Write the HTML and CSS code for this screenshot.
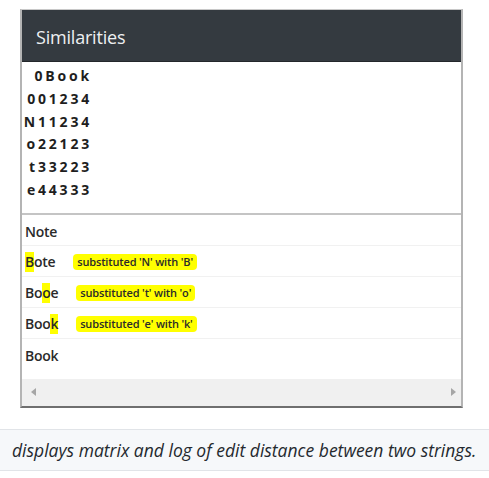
FILE: index.html
```html
<!DOCTYPE html>
<html>
<head>
<meta charset="utf-8">
<link rel="stylesheet" href="styles.css">
</head>
<body>
<div class="window">
  <div class="header">Similarities</div>
  <div class="matrix">
    <div class="line">0Book</div>
    <div class="line">001234</div>
    <div class="line">N11234</div>
    <div class="line">o22123</div>
    <div class="line">t33223</div>
    <div class="line">e44333</div>
  </div>
  <div class="list">
    <div class="row"><span class="word">Note</span></div>
    <div class="row"><span class="word"><span class="hl">B</span>ote</span><span class="badge">substituted 'N' with 'B'</span></div>
    <div class="row"><span class="word">Bo<span class="hl">o</span>e</span><span class="badge">substituted 't' with 'o'</span></div>
    <div class="row"><span class="word">Boo<span class="hl">k</span></span><span class="badge">substituted 'e' with 'k'</span></div>
    <div class="row last"><span class="word">Book</span></div>
    <div class="spacer"></div>
    <div class="hscroll">
      <span class="arrow left"></span>
      <span class="arrow right"></span>
    </div>
  </div>
</div>
<div class="caption"><em>displays matrix and log of edit distance between two strings.</em></div>
</body>
</html>
```
FILE: styles.css
```css
html, body {
  margin: 0;
  padding: 0;
  background: #ffffff;
}
body {
  font-family: "Open Sans", "Noto Sans", sans-serif;
  color: #222;
}
.window {
  margin: 9px 0 0 20px;
  width: 443px;
  box-sizing: border-box;
  border-top: 1px solid #c8c8c8;
  border-left: 2px solid #b4b4b4;
  border-right: 2px solid #b4b4b4;
  border-bottom: 2px solid #6f6f6f;
  background: #fff;
}
.header {
  height: 51px;
  background: #343a40;
  border-bottom: 1px solid #23272b;
  color: #eef0f2;
  font-size: 18px;
  line-height: 55px;
  padding-left: 14px;
  letter-spacing: -0.2px;
}
.matrix {
  padding: 3px 0 11px 0;
  border-bottom: 2px solid #c4c4c4;
}
.line {
  width: 70px;
  text-align: right;
  font-weight: 700;
  font-size: 14px;
  line-height: 22.8px;
  letter-spacing: 2.8px;
  color: #1e1e1e;
}
.list {
  display: flex;
  flex-direction: column;
}
.row {
  height: 27px;
  border-bottom: 1px solid #f1f1f1;
  display: flex;
  align-items: center;
  padding-left: 3px;
  padding-top: 3px;
  font-size: 14px;
  font-weight: 600;
  color: #2a2a2a;
}
.row.last {
  border-bottom: none;
}
.word {
  letter-spacing: -0.3px;
}
.hl {
  background: #ffff00;
  display: inline-block;
  line-height: 20px;
}
.badge {
  margin-left: 18px;
  background: #ffff00;
  border-radius: 4px;
  font-size: 11px;
  font-weight: 600;
  line-height: 16px;
  padding: 0 4px;
  letter-spacing: -0.15px;
  color: #2a2a2a;
}
.spacer {
  height: 10px;
}
.hscroll {
  height: 27px;
  background: #f0f0f0;
  display: flex;
  align-items: center;
  justify-content: space-between;
  padding: 0 5px 0 9px;
}
.arrow {
  width: 0;
  height: 0;
  border-top: 4px solid transparent;
  border-bottom: 4px solid transparent;
}
.arrow.left {
  border-right: 5px solid #a6a6a6;
}
.arrow.right {
  border-left: 5px solid #a6a6a6;
}
.caption {
  margin-top: 21px;
  background: #f6f8fa;
  border-top: 1px solid #e1e4e8;
  border-bottom: 1px solid #e1e4e8;
  height: 40px;
  line-height: 40px;
  padding-left: 12px;
  font-size: 17.5px;
  color: #24292e;
  white-space: nowrap;
}
.caption em {
  font-style: italic;
}
```
